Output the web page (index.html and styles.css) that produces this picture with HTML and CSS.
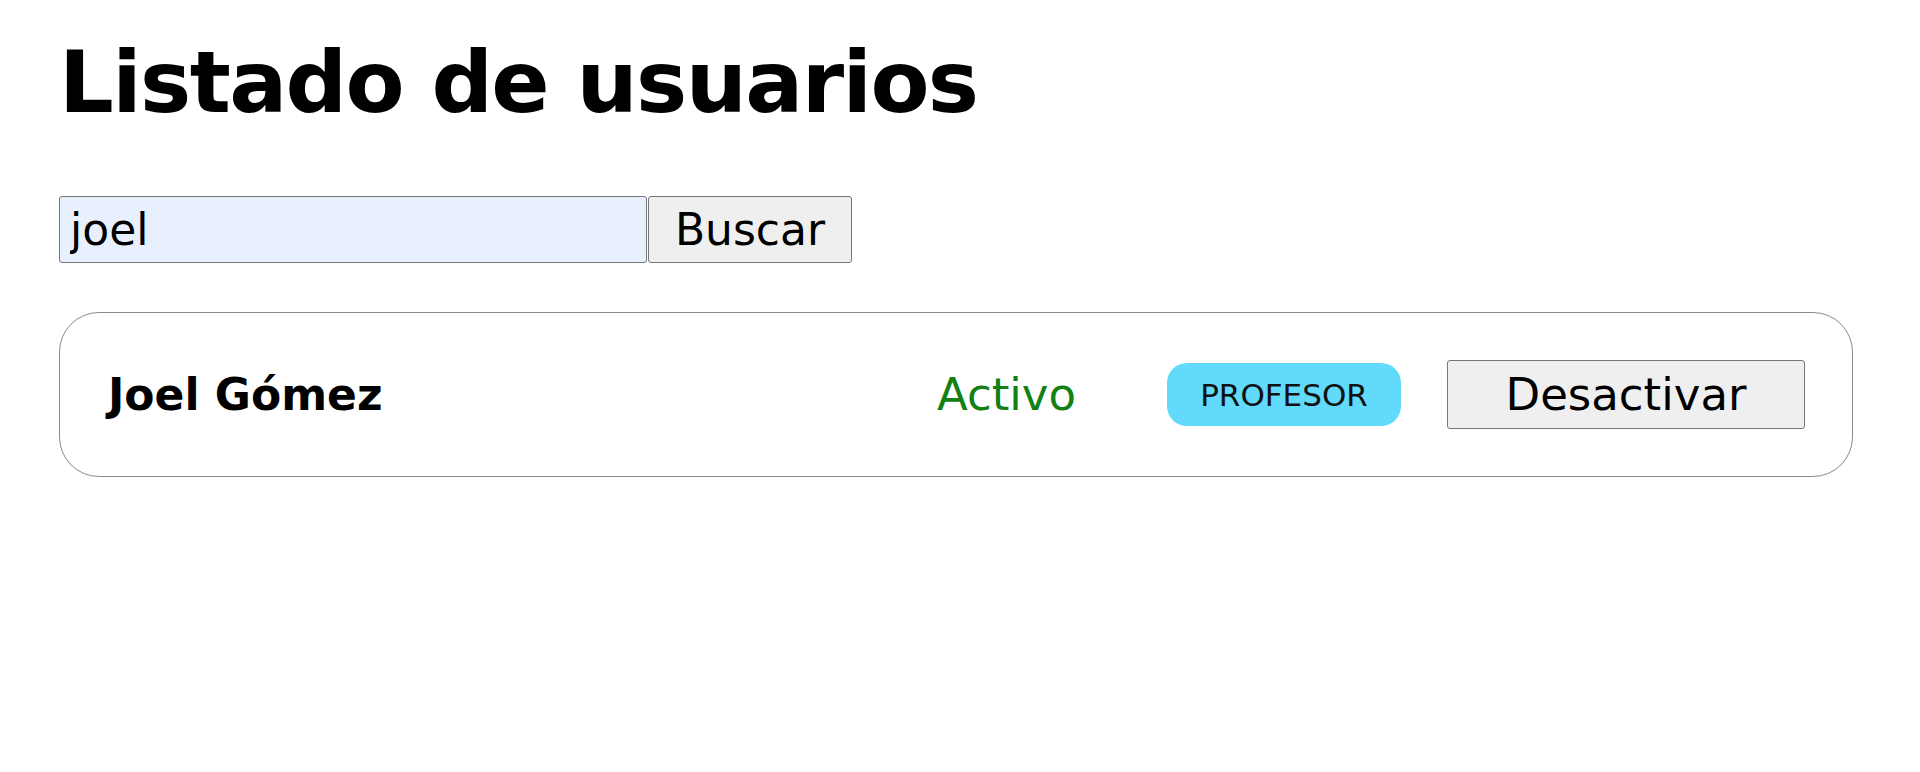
FILE: index.html
```html
<!DOCTYPE html>
<html lang="es">
<head>
<meta charset="utf-8">
<title>Listado de usuarios</title>
<link rel="stylesheet" href="styles.css">
</head>
<body>
<main class="page">
  <h1 class="title">Listado de usuarios</h1>
  <form class="search">
    <input class="search-input" type="text" value="joel">
    <button class="btn search-btn" type="button">Buscar</button>
  </form>
  <ul class="user-list">
    <li class="user-card">
      <span class="user-name">Joel Gómez</span>
      <span class="user-status">Activo</span>
      <span class="role-badge">PROFESOR</span>
      <button class="btn toggle-btn" type="button">Desactivar</button>
    </li>
  </ul>
</main>
</body>
</html>
```

FILE: styles.css
```css
html, body {
  margin: 0;
  padding: 0;
  background: #ffffff;
}

body {
  font-family: "DejaVu Sans", "Liberation Sans", sans-serif;
  color: #000;
}

.page {
  padding: 0 67px 0 59px;
}

.title {
  margin: 39px 0 0 0;
  font-size: 86px;
  line-height: 1;
  font-weight: 700;
  letter-spacing: -1.6px;
}

.search {
  display: flex;
  margin-top: 71px;
}

.search-input {
  box-sizing: border-box;
  width: 588px;
  height: 67px;
  margin: 0;
  padding: 0 10px;
  font-family: inherit;
  font-size: 44px;
  color: #000;
  background: #e8f0fe;
  border: 1px solid #767676;
  border-radius: 3px;
  outline: none;
}

.btn {
  box-sizing: border-box;
  margin: 0;
  font-family: inherit;
  color: #000;
  background: #efefef;
  border: 1px solid #767676;
  border-radius: 3px;
  cursor: pointer;
}

.search-btn {
  width: 204px;
  height: 67px;
  margin-left: 1px;
  padding: 0;
  font-size: 44px;
}

.user-list {
  list-style: none;
  margin: 49px 0 0 0;
  padding: 0;
}

.user-card {
  display: flex;
  align-items: center;
  gap: 46px;
  padding: 47px 47px 47px 48px;
  border: 1px solid #8a8a8a;
  border-radius: 40px;
}

.user-name {
  flex: 1;
  font-size: 44px;
  font-weight: 700;
}

.user-status {
  margin-right: 45px;
  font-size: 45px;
  color: #128012;
}

.role-badge {
  display: flex;
  align-items: center;
  justify-content: center;
  box-sizing: border-box;
  width: 234px;
  height: 63px;
  font-size: 31px;
  color: #111;
  background: #61dafb;
  border-radius: 20px;
}

.toggle-btn {
  width: 358px;
  height: 69px;
  padding: 0;
  font-size: 45px;
}
```
